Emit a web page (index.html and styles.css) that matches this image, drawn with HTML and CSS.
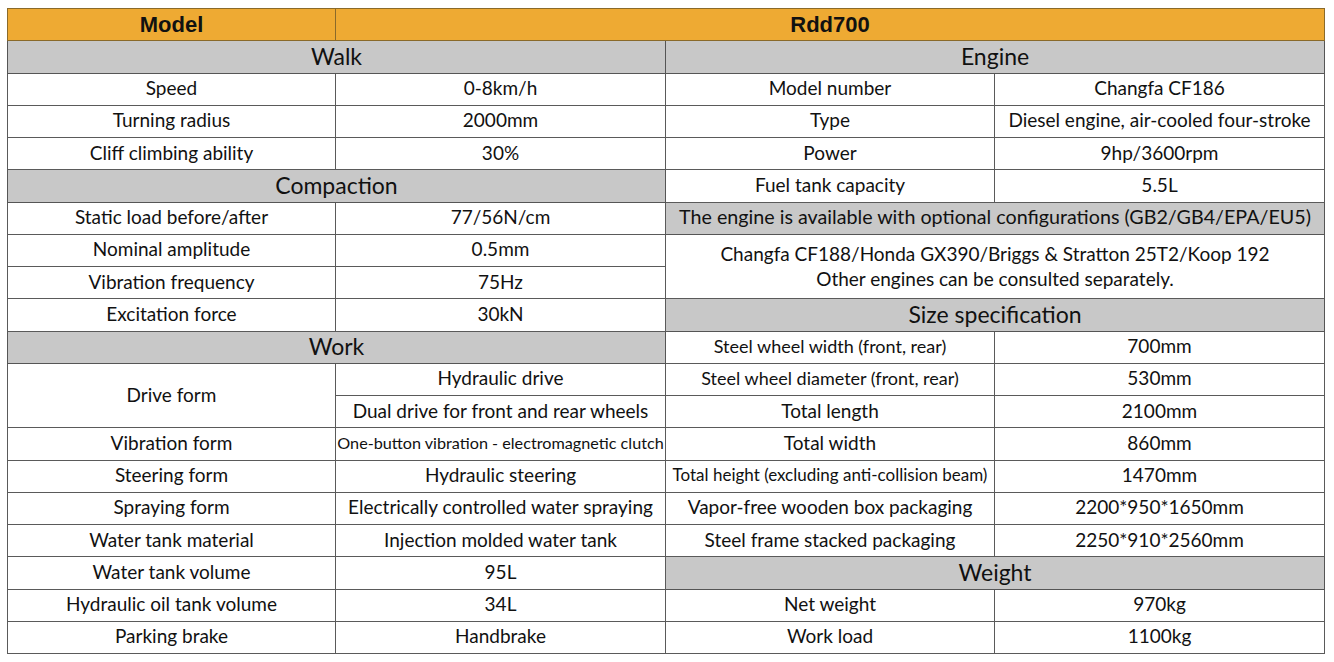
FILE: index.html
```html
<!DOCTYPE html>
<html>
<head>
<meta charset="utf-8">
<link rel="stylesheet" href="styles.css">
</head>
<body>
<table class="spec">
  <colgroup>
    <col class="c1"><col class="c2"><col class="c3"><col class="c4">
  </colgroup>
  <tr class="head">
    <td>Model</td>
    <td colspan="3">Rdd700</td>
  </tr>
  <tr>
    <td colspan="2" class="sec">Walk</td>
    <td colspan="2" class="sec">Engine</td>
  </tr>
  <tr>
    <td>Speed</td><td>0-8km/h</td>
    <td>Model number</td><td>Changfa CF186</td>
  </tr>
  <tr>
    <td>Turning radius</td><td>2000mm</td>
    <td>Type</td><td>Diesel engine, air-cooled four-stroke</td>
  </tr>
  <tr>
    <td>Cliff climbing ability</td><td>30%</td>
    <td>Power</td><td>9hp/3600rpm</td>
  </tr>
  <tr>
    <td colspan="2" class="sec">Compaction</td>
    <td>Fuel tank capacity</td><td>5.5L</td>
  </tr>
  <tr>
    <td>Static load before/after</td><td>77/56N/cm</td>
    <td colspan="2" class="sec opt">The engine is available with optional configurations (GB2/GB4/EPA/EU5)</td>
  </tr>
  <tr>
    <td>Nominal amplitude</td><td>0.5mm</td>
    <td colspan="2" rowspan="2" class="multi">Changfa CF188/Honda GX390/Briggs &amp; Stratton 25T2/Koop 192<br>Other engines can be consulted separately.</td>
  </tr>
  <tr>
    <td>Vibration frequency</td><td>75Hz</td>
  </tr>
  <tr>
    <td>Excitation force</td><td>30kN</td>
    <td colspan="2" class="sec">Size specification</td>
  </tr>
  <tr>
    <td colspan="2" class="sec">Work</td>
    <td class="small">Steel wheel width (front, rear)</td><td>700mm</td>
  </tr>
  <tr>
    <td rowspan="2">Drive form</td><td>Hydraulic drive</td>
    <td class="small">Steel wheel diameter (front, rear)</td><td>530mm</td>
  </tr>
  <tr>
    <td>Dual drive for front and rear wheels</td>
    <td>Total length</td><td>2100mm</td>
  </tr>
  <tr>
    <td>Vibration form</td><td class="tiny">One-button vibration - electromagnetic clutch</td>
    <td>Total width</td><td>860mm</td>
  </tr>
  <tr>
    <td>Steering form</td><td>Hydraulic steering</td>
    <td class="tight">Total height (excluding anti-collision beam)</td><td>1470mm</td>
  </tr>
  <tr>
    <td>Spraying form</td><td>Electrically controlled water spraying</td>
    <td>Vapor-free wooden box packaging</td><td>2200*950*1650mm</td>
  </tr>
  <tr>
    <td>Water tank material</td><td>Injection molded water tank</td>
    <td>Steel frame stacked packaging</td><td>2250*910*2560mm</td>
  </tr>
  <tr>
    <td>Water tank volume</td><td>95L</td>
    <td colspan="2" class="sec">Weight</td>
  </tr>
  <tr>
    <td>Hydraulic oil tank volume</td><td>34L</td>
    <td>Net weight</td><td>970kg</td>
  </tr>
  <tr>
    <td>Parking brake</td><td>Handbrake</td>
    <td>Work load</td><td>1100kg</td>
  </tr>
</table>
</body>
</html>
```

FILE: styles.css
```css
html, body {
  margin: 0;
  padding: 0;
  background: #ffffff;
}

body {
  padding: 8px 0 0 7px;
}

.spec {
  border-collapse: collapse;
  table-layout: fixed;
  width: 1317px;
  font-family: Lato, "Open Sans", "Noto Sans", sans-serif;
  font-size: 19px;
  color: #111111;
  border: 1px solid #555555;
}

.c1 { width: 328px; }
.c2 { width: 330px; }
.c3 { width: 329px; }
.c4 { width: 330px; }

.spec td {
  border: 1px solid #5a5a5a;
  height: 32.25px;
  padding: 0 2px 2px;
  text-align: center;
  vertical-align: middle;
  white-space: nowrap;
  box-sizing: border-box;
  line-height: 22px;
  overflow: hidden;
}

.spec tr.head td {
  background: #eeaa33;
  font-family: "Liberation Sans", Arial, sans-serif;
  font-weight: 700;
  font-size: 22px;
  color: #111111;
  border-color: #8a6a2a;
  padding-bottom: 0;
}

.spec td.sec {
  background: #c8c8c8;
  font-size: 23px;
  border-color: #555555;
}

.spec td.opt {
  font-size: 19.7px;
}

.spec td.multi {
  line-height: 25px;
  padding-top: 0;
}

.spec td.small {
  font-size: 18px;
}

.spec td.tight {
  font-size: 17px;
  padding: 0 0 2px;
}

.spec td.tiny {
  font-size: 16.2px;
  padding: 0 0 2px;
}
```
